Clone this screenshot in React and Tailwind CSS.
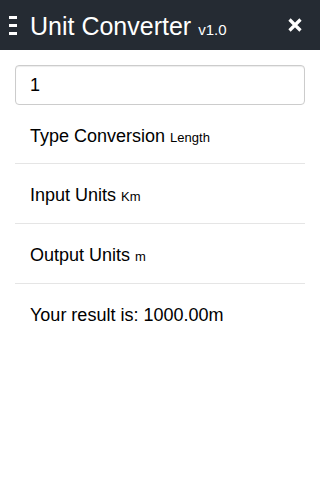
export default function App() {
  const rows = [
    { label: "Type Conversion", value: "Length", h: "h-[59px]" },
    { label: "Input Units", value: "Km", h: "h-[60px]" },
    { label: "Output Units", value: "m", h: "h-[60px]" },
  ];
  return (
    <div className="w-[320px] h-[480px] bg-white font-['Liberation_Sans',Arial,sans-serif] text-black">
      <header className="h-[50px] bg-[#252b33] flex items-center pl-[9px] pr-[18px]">
        <div className="flex flex-col gap-[5px] w-[8px]">
          <div className="h-[3px] bg-white" />
          <div className="h-[3px] bg-white" />
          <div className="h-[3px] bg-white" />
        </div>
        <div className="ml-[13px] mt-[5px] text-white text-[25px] leading-[28px] whitespace-nowrap">
          Unit Converter <span className="text-[15px]">v1.0</span>
        </div>
        <div className="ml-auto">
          <svg width="14" height="14" viewBox="0 0 14 14" className="block">
            <path d="M1.5 1.5 L12.5 12.5 M12.5 1.5 L1.5 12.5" stroke="white" strokeWidth="3.2" strokeLinecap="butt" fill="none" />
          </svg>
        </div>
      </header>
      <main className="px-[15px] pt-[15px]">
        <div className="h-[40px] border border-[#cccccc] rounded-[4px] flex items-center pl-[14px] text-[18px] shadow-[inset_0_1px_1px_rgba(0,0,0,0.075)]">
          1
        </div>
        {rows.map((r) => (
          <div key={r.label} className={`${r.h} border-b border-[#e5e5e5] pt-[21px] pl-[15px] text-[18px] leading-[20px] whitespace-nowrap`}>
            {r.label} <span className="text-[13px]">{r.value}</span>
          </div>
        ))}
        <div className="h-[60px] pt-[21px] pl-[15px] text-[18px] leading-[20px] whitespace-nowrap">
          Your result is: 1000.00m
        </div>
      </main>
    </div>
  );
}
